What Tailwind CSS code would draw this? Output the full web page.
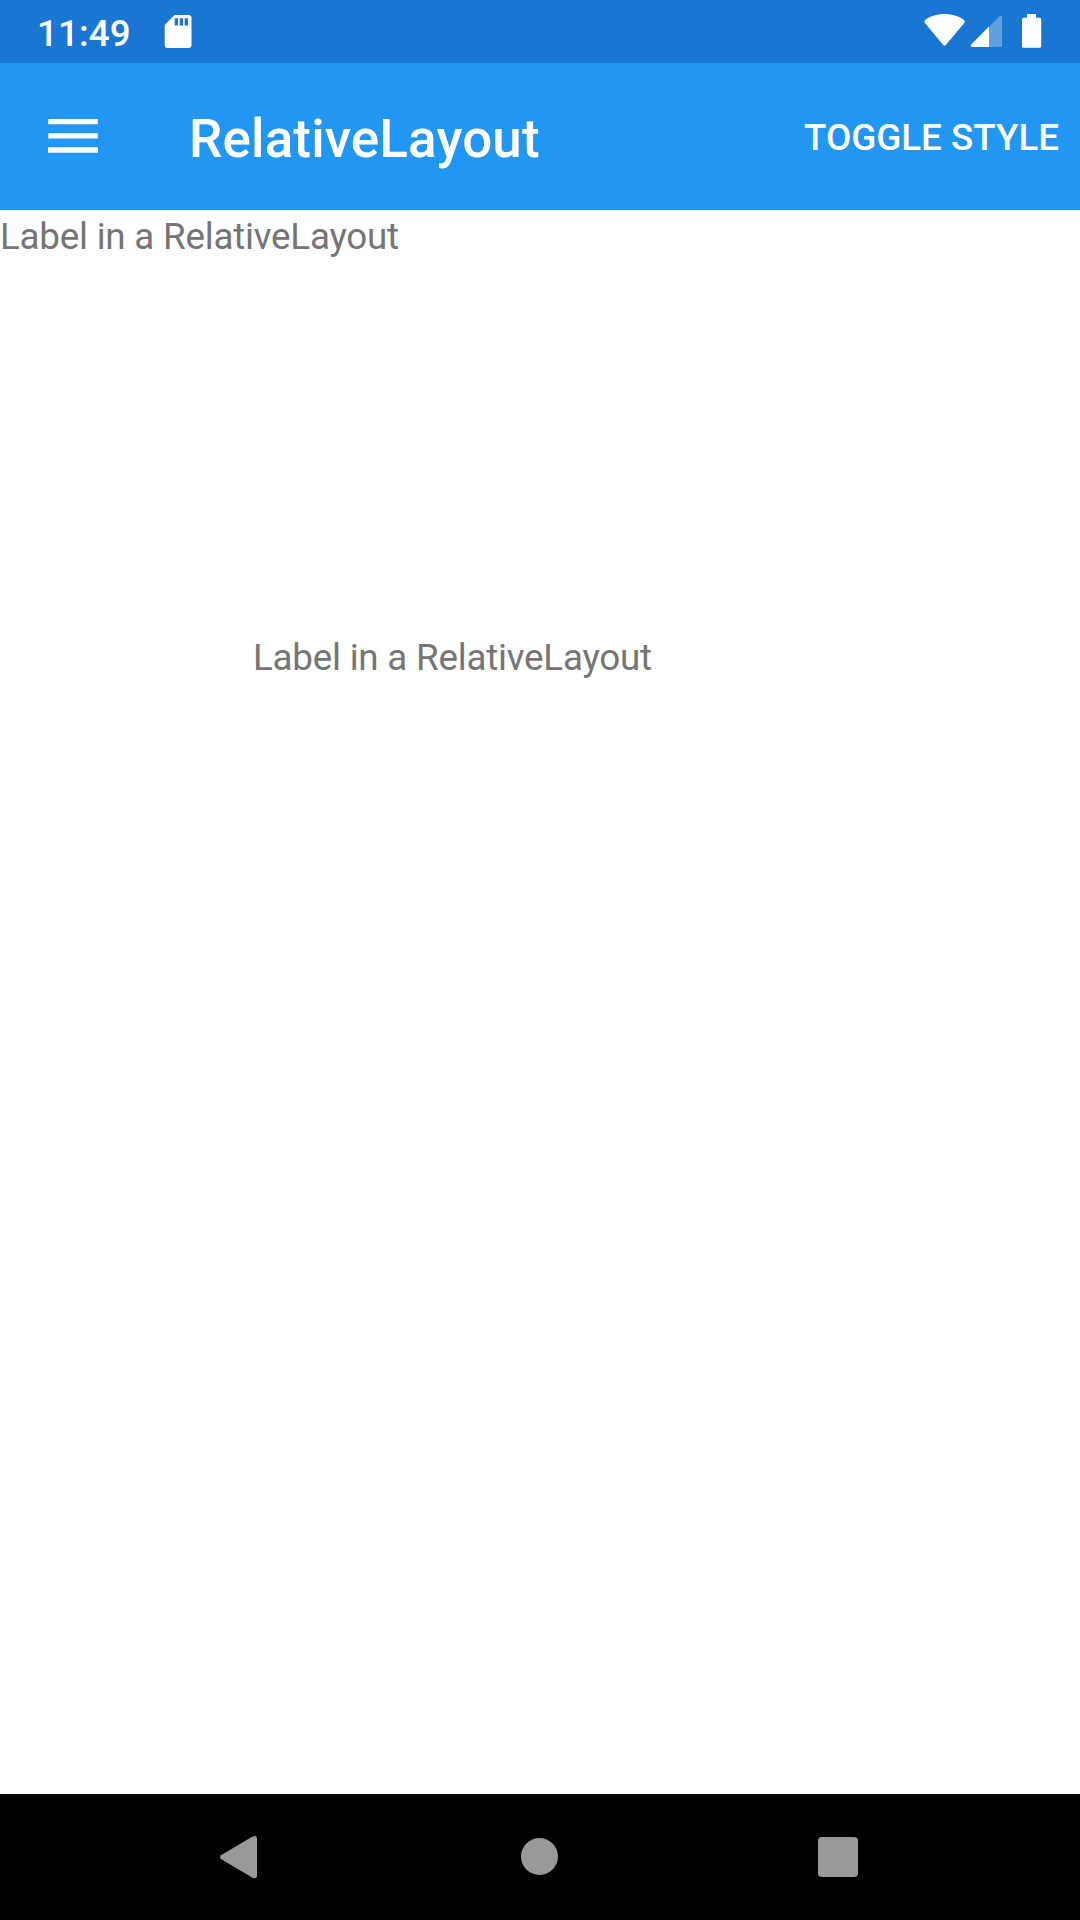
<!DOCTYPE html>
<html lang="en">
<head>
<meta charset="utf-8">
<title>RelativeLayout</title>
<script src="https://cdn.jsdelivr.net/npm/@tailwindcss/browser@4"></script>
</head>
<body class="flex h-[1920px] w-[1080px] flex-col overflow-hidden bg-white font-['Roboto',sans-serif]">
  <div class="flex h-[63px] shrink-0 items-start justify-between bg-[#1976d2] text-white">
    <div class="flex items-start pl-[37px]">
      <span class="w-[119px] pt-[12px] text-[36.75px] leading-[43px] font-medium tracking-[0.1px] whitespace-nowrap">11:49</span>
      <svg class="h-[63px] w-[44px]" viewBox="156 0 44 63" fill="currentColor">
        <path fill-rule="evenodd" d="M174.500 15H188.500Q191.500 15 191.500 18V45Q191.500 48 188.500 48H167.700Q164.700 48 164.700 45V25ZM174.700 18.300V25.500H178V18.300ZM179.700 18.300V25.500H183V18.300ZM184.700 18.300V25.500H188V18.300Z"/>
      </svg>
    </div>
    <svg class="h-[63px] w-[180px]" viewBox="900 0 180 63" fill="currentColor">
      <path d="M944.500 14C952.500 14 959.500 16.500 964 20Q965.500 21.200 964.300 22.900L946 44.800Q944.500 46.500 943 44.800L924.900 22.900Q923.700 21.200 925.200 20C929.500 16.500 936.500 14 944.500 14Z"/>
      <path fill-opacity=".3" d="M989 27L999.500 16.300Q1002 14.500 1002 17V45.500Q1002 47 1000.500 47H989Z"/>
      <path d="M989 26.500V47H972.300Q969.800 46.500 971.400 44.200Z"/>
      <path d="M1027 14H1036V17.700H1039.700Q1041.200 17.700 1041.200 19.200V46.200Q1041.200 47.700 1039.700 47.700H1023.500Q1022 47.700 1022 46.200V19.200Q1022 17.700 1023.500 17.700H1027Z"/>
    </svg>
  </div>
  <header class="flex h-[147px] shrink-0 items-start bg-[#2196f3] font-medium text-white">
    <svg class="h-[147px] w-[189px]" viewBox="0 63 189 147" fill="currentColor">
      <path d="M48.300 119H97.800V124.200H48.300ZM48.300 133.200H97.800V138.500H48.300ZM48 147.200H98V152.800H48Z"/>
    </svg>
    <h1 class="pt-[45px] text-[53px] leading-[62px] tracking-[0.13px] whitespace-nowrap">RelativeLayout</h1>
    <button class="mr-[21px] ml-auto pt-[53px] text-[36.75px] leading-[43px] whitespace-nowrap">TOGGLE STYLE</button>
  </header>
  <main class="flex flex-1 flex-col text-[36.75px] leading-[43px] tracking-[-0.22px] text-[#757575]">
    <p class="pt-[5px]">Label in a RelativeLayout</p>
    <p class="pt-[378px] pl-[253px]">Label in a RelativeLayout</p>
  </main>
  <nav class="flex h-[126px] shrink-0 items-start bg-black">
    <svg class="h-[126px] w-full" viewBox="0 1794 1080 126" fill="#999">
      <path d="M220.900 1855.200L252.500 1836.500Q257 1834.800 257 1839V1875.300Q257 1879.500 252.500 1877.700L220.900 1858.900Q219.200 1857 220.900 1855.200Z"/>
      <circle cx="539.500" cy="1856.500" r="18.500"/>
      <rect x="818" y="1837" width="40" height="40" rx="4"/>
    </svg>
  </nav>
</body>
</html>
